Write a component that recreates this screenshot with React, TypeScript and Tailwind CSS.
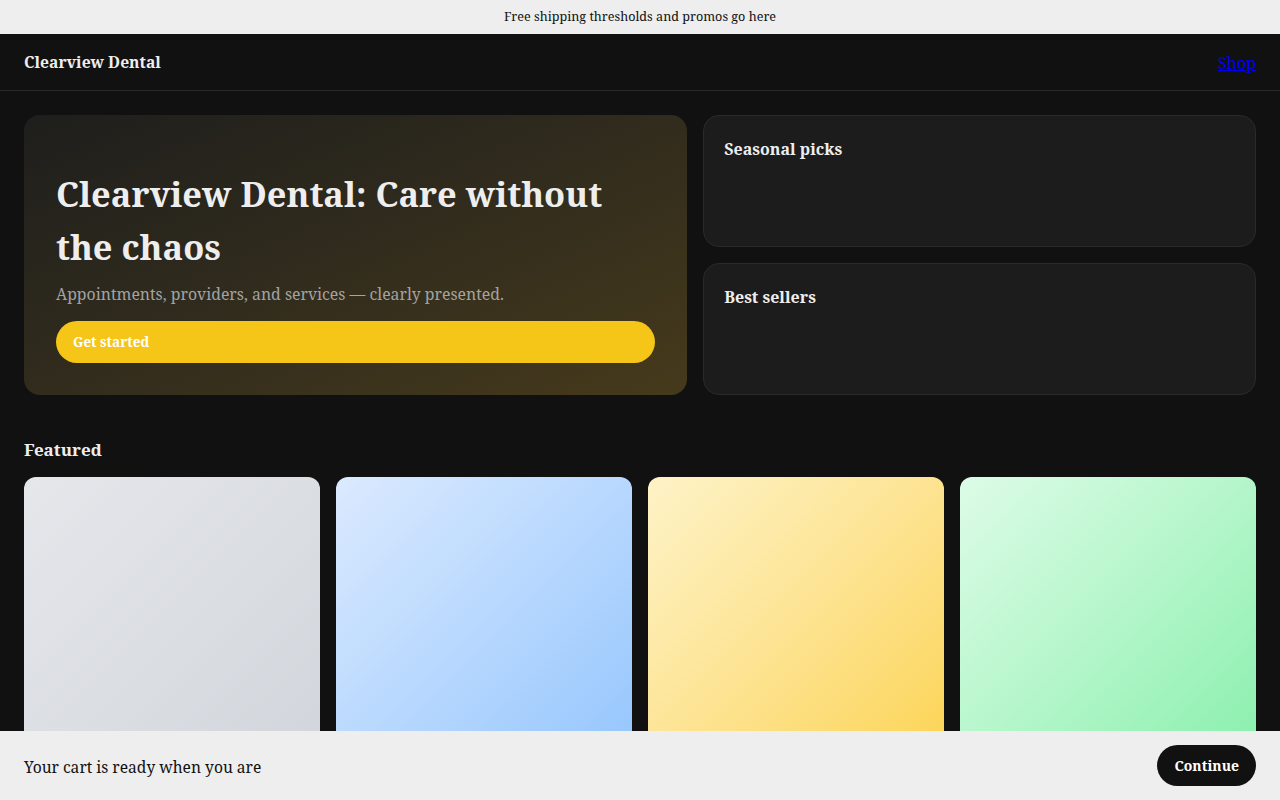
import React from "react";

export default function App() {
  const cards = [
    "bg-gradient-to-br from-[#e5e7eb] to-[#d1d5db]",
    "bg-gradient-to-br from-[#dbeafe] to-[#93c5fd]",
    "bg-gradient-to-br from-[#fef3c7] to-[#fcd34d]",
    "bg-gradient-to-br from-[#dcfce7] to-[#86efac]",
  ];
  return (
    <div className="min-h-screen bg-[#111111] text-[#eeeeee] font-['Noto_Serif','DejaVu_Serif',serif]">
      <div className="h-[34px] bg-[#eeeeee] text-[#111111] text-[12.6px] flex items-center justify-center">
        Free shipping thresholds and promos go here
      </div>
      <header className="h-[57px] flex items-center justify-between px-6 border-b border-[#2a2a2a]">
        <div className="text-[15.7px] font-bold pt-[1px]">Clearview Dental</div>
        <a href="#" className="text-[#0000ee] underline text-[16px] pt-[1px]">Shop</a>
      </header>
      <main className="px-6 pt-6 pb-24">
        <div className="grid grid-cols-[1.2fr_1fr] gap-4">
          <div className="h-[280px] rounded-2xl bg-gradient-to-br from-[#1e1e1c] to-[#463a1b] p-8 flex flex-col justify-end">
            <h1 className="text-[34.4px] leading-[53px] font-bold text-[#eeeeee]">
              Clearview Dental: Care without the chaos
            </h1>
            <p className="mt-2 text-[15.8px] leading-[26px] text-[#a3a3a3]">
              Appointments, providers, and services — clearly presented.
            </p>
            <button className="mt-3.5 h-[42px] w-full rounded-full bg-[#f5c518] text-white text-[13.5px] font-bold text-left pl-[17px]">
              Get started
            </button>
          </div>
          <div className="grid grid-rows-2 gap-4">
            <div className="rounded-2xl bg-[#1c1c1c] border border-[#2a2a2a] px-5 py-5">
              <h3 className="text-[16px] font-bold leading-[26px]">Seasonal picks</h3>
            </div>
            <div className="rounded-2xl bg-[#1c1c1c] border border-[#2a2a2a] px-5 py-5">
              <h3 className="text-[16px] font-bold leading-[26px]">Best sellers</h3>
            </div>
          </div>
        </div>
        <section className="pt-[41px]">
          <h2 className="text-[17px] font-bold leading-[27px] mb-3.5">Featured</h2>
          <div className="grid grid-cols-4 gap-4">
            {cards.map((c, i) => (
              <div key={i} className={`aspect-square rounded-xl ${c}`} />
            ))}
          </div>
        </section>
      </main>
      <div className="fixed bottom-0 left-0 right-0 h-[69px] bg-[#eeeeee] text-[#111111] flex items-center justify-between px-6">
        <span className="text-[15.6px] pt-[5px]">Your cart is ready when you are</span>
        <button className="h-[41px] px-[17px] rounded-full bg-[#111111] text-white text-[14px] font-bold">
          Continue
        </button>
      </div>
    </div>
  );
}
